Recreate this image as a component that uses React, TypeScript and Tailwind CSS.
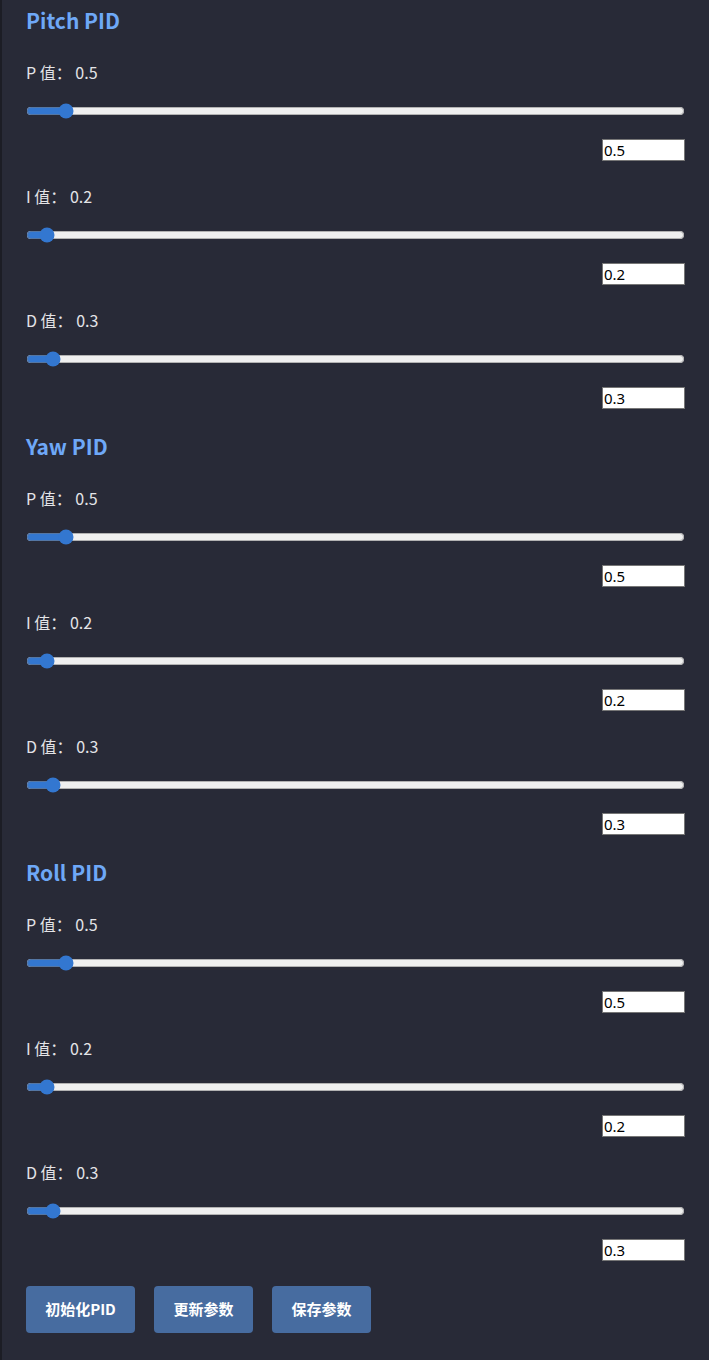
import React, { useState } from 'react';

type Gains = { p: number; i: number; d: number };

const FONT = '"Noto Sans CJK SC", "Noto Sans", sans-serif';

const ParamRow = ({
  label,
  value,
  onChange,
}: {
  label: string;
  value: number;
  onChange: (v: number) => void;
}) => {
  return (
    <div className="flex flex-col">
      <div className="text-[16px] leading-[24px] text-[#e4e4e7]">
        {label} 值：&nbsp;{value}
      </div>
      <div className="mt-[17px] h-[20px] flex items-center">
        <input
          type="range"
          min={0}
          max={10}
          step={0.1}
          value={value}
          onChange={(e) => onChange(parseFloat(e.target.value))}
          className="w-full accent-[#3377d0] m-0"
        />
      </div>
      <div className="mt-[18px] flex justify-end">
        <input
          type="text"
          value={value}
          onChange={(e) => onChange(parseFloat(e.target.value) || 0)}
          className="w-[83px] h-[22px] bg-white border border-[#767676] px-[1px] text-[15px] text-black outline-none"
          style={{ fontFamily: '"Noto Sans", sans-serif' }}
        />
      </div>
    </div>
  );
};

const PidSection = ({
  title,
  gains,
  setGains,
}: {
  title: string;
  gains: Gains;
  setGains: (g: Gains) => void;
}) => {
  return (
    <div className="flex flex-col">
      <h3 className="text-[21px] leading-[28px] font-bold text-[#6ea8f7]">
        {title}
      </h3>
      <div className="mt-[26px] flex flex-col gap-[23px]">
        <ParamRow label="P" value={gains.p} onChange={(v) => setGains({ ...gains, p: v })} />
        <ParamRow label="I" value={gains.i} onChange={(v) => setGains({ ...gains, i: v })} />
        <ParamRow label="D" value={gains.d} onChange={(v) => setGains({ ...gains, d: v })} />
      </div>
    </div>
  );
};

const App = () => {
  const initial: Gains = { p: 0.5, i: 0.2, d: 0.3 };
  const [pitch, setPitch] = useState<Gains>(initial);
  const [yaw, setYaw] = useState<Gains>(initial);
  const [roll, setRoll] = useState<Gains>(initial);

  return (
    <div
      className="w-full min-h-[1360px] bg-[#282a37] border-l-2 border-[#1c1d25] pl-6 pr-6 pt-[6px] pb-6"
      style={{ fontFamily: FONT }}
    >
      <div className="flex flex-col gap-[23px]">
        <PidSection title="Pitch PID" gains={pitch} setGains={setPitch} />
        <PidSection title="Yaw PID" gains={yaw} setGains={setYaw} />
        <PidSection title="Roll PID" gains={roll} setGains={setRoll} />
      </div>
      <div className="mt-[25px] flex gap-[19px]">
        <button className="w-[109px] h-[47px] rounded bg-[#476ca0] text-white text-[15px] font-bold">
          初始化PID
        </button>
        <button className="w-[99px] h-[47px] rounded bg-[#476ca0] text-white text-[15px] font-bold">
          更新参数
        </button>
        <button className="w-[99px] h-[47px] rounded bg-[#476ca0] text-white text-[15px] font-bold">
          保存参数
        </button>
      </div>
    </div>
  );
};

export default App;
